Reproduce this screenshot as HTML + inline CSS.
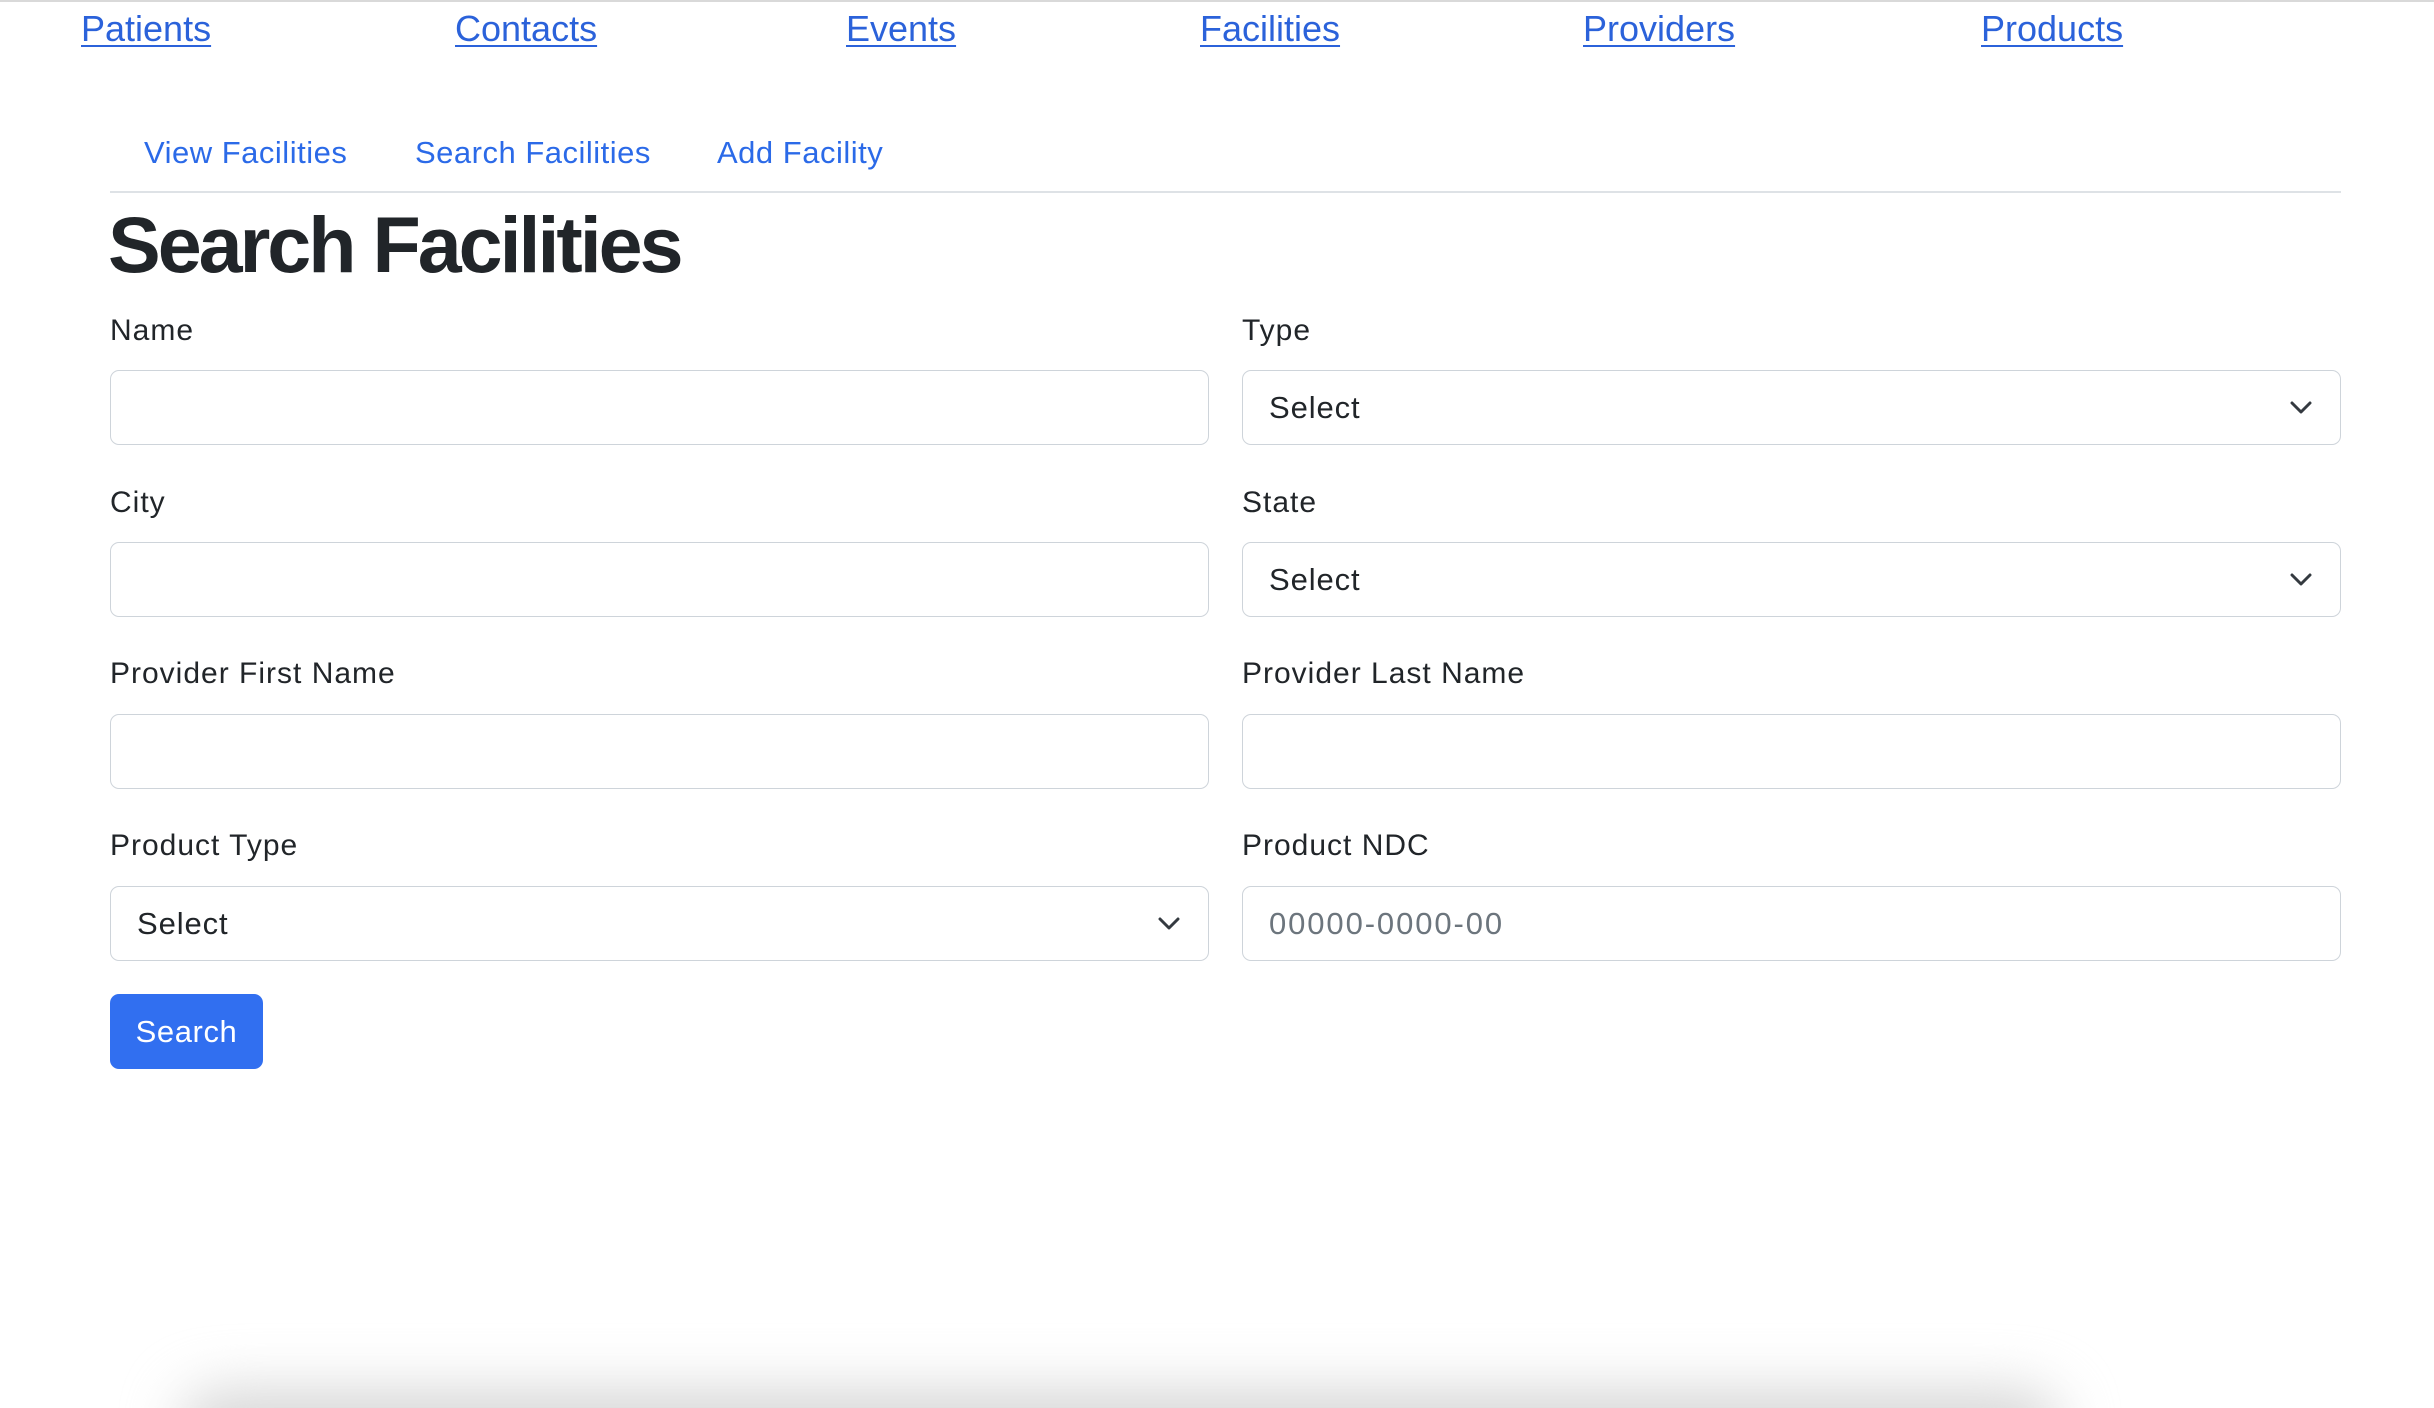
<!DOCTYPE html>
<html><head><meta charset="utf-8"><style>
html,body{margin:0;padding:0;background:#fff;width:2434px;height:1408px;overflow:hidden;position:relative;font-family:"Liberation Sans",Arial,sans-serif;color:#212529}
.top{position:absolute;left:0;top:0;width:2434px;height:2px;background:#d9d9d9}
.nav{position:absolute;top:8px;font-size:36px;line-height:42px;color:#2b62da;text-decoration:underline;text-decoration-thickness:2px;text-underline-offset:4px}
.tab{position:absolute;top:135px;font-size:31px;line-height:36px;color:#2b6ae8;letter-spacing:0.5px}
.hr{position:absolute;left:110px;top:191px;width:2231px;height:2px;background:#dee2e6}
h1{position:absolute;left:108px;top:195px;margin:0;font-size:79px;line-height:100px;font-weight:bold;letter-spacing:-3px;color:#212529}
.lbl{position:absolute;font-size:30px;line-height:34px;letter-spacing:1px;color:#212529}
.in{position:absolute;width:1099px;border:1.5px solid #ced4da;border-radius:9px;box-sizing:border-box;height:75px;font-size:31px;letter-spacing:0.9px;line-height:74px;padding-left:26px}
.ph{color:#6c757d;letter-spacing:1.9px}
.chev{position:absolute;right:28px;top:30px}
.btn{position:absolute;left:110px;top:994px;width:153px;height:75px;background:#316ff0;border-radius:9px;color:#fff;font-size:31px;letter-spacing:0.6px;line-height:75px;text-align:center}
.shadow{position:absolute;left:180px;top:1390px;width:1880px;height:80px;background:#d6d6d6;filter:blur(28px);border-radius:40px}
</style></head><body>
<div class="top"></div>
<span class="nav" style="left:81px">Patients</span>
<span class="nav" style="left:455px">Contacts</span>
<span class="nav" style="left:846px">Events</span>
<span class="nav" style="left:1200px">Facilities</span>
<span class="nav" style="left:1583px">Providers</span>
<span class="nav" style="left:1981px">Products</span>

<span class="tab" style="left:144px">View Facilities</span>
<span class="tab" style="left:415px">Search Facilities</span>
<span class="tab" style="left:717px">Add Facility</span>
<div class="hr"></div>
<h1>Search Facilities</h1>

<span class="lbl" style="left:110px;top:314px">Name</span>
<span class="lbl" style="left:1242px;top:314px">Type</span>
<div class="in" style="left:110px;top:370px"></div>
<div class="in" style="left:1242px;top:370px">Select<svg class="chev" width="22" height="14" viewBox="0 0 22 14"><path d="M2 2 L11 11 L20 2" fill="none" stroke="#343a40" stroke-width="3" stroke-linecap="round" stroke-linejoin="round"/></svg></div>

<span class="lbl" style="left:110px;top:486px">City</span>
<span class="lbl" style="left:1242px;top:486px">State</span>
<div class="in" style="left:110px;top:542px"></div>
<div class="in" style="left:1242px;top:542px">Select<svg class="chev" width="22" height="14" viewBox="0 0 22 14"><path d="M2 2 L11 11 L20 2" fill="none" stroke="#343a40" stroke-width="3" stroke-linecap="round" stroke-linejoin="round"/></svg></div>

<span class="lbl" style="left:110px;top:657px">Provider First Name</span>
<span class="lbl" style="left:1242px;top:657px">Provider Last Name</span>
<div class="in" style="left:110px;top:714px"></div>
<div class="in" style="left:1242px;top:714px"></div>

<span class="lbl" style="left:110px;top:829px">Product Type</span>
<span class="lbl" style="left:1242px;top:829px">Product NDC</span>
<div class="in" style="left:110px;top:886px">Select<svg class="chev" width="22" height="14" viewBox="0 0 22 14"><path d="M2 2 L11 11 L20 2" fill="none" stroke="#343a40" stroke-width="3" stroke-linecap="round" stroke-linejoin="round"/></svg></div>
<div class="in ph" style="left:1242px;top:886px">00000-0000-00</div>

<div class="btn">Search</div>
<div class="shadow"></div>
</body></html>
